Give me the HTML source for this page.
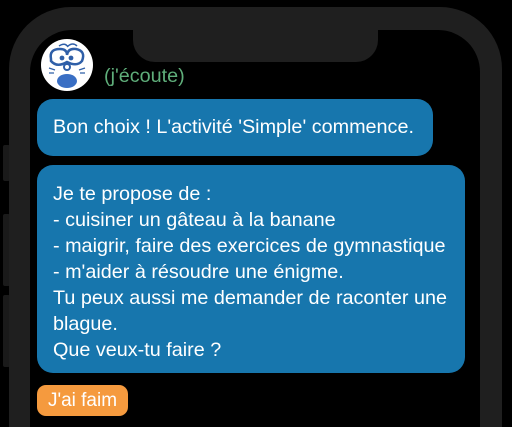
<!DOCTYPE html>
<html><head><meta charset="utf-8"><style>
html,body{margin:0;padding:0;background:#000;width:512px;height:427px;overflow:hidden;position:relative;font-family:"Liberation Sans",sans-serif}
.bezel{position:absolute;left:9px;top:7px;width:493px;height:420px;border-radius:62px 62px 0 0;background:#1f1f1f}
.screen{position:absolute;left:30px;top:30px;width:450px;height:397px;border-radius:42px 42px 0 0;background:#000}
.notch{position:absolute;left:133px;top:20px;width:245px;height:42px;background:#1f1f1f;border-radius:0 0 22px 22px}
.btn{position:absolute;left:3px;width:7px;background:#1a1a1a;border-radius:2px}
.b{position:absolute;background:#1776ad;color:#fff;font-size:19.8px;border-radius:16px;box-sizing:border-box;white-space:nowrap}
</style></head><body>
<div class="btn" style="top:145px;height:36px"></div>
<div class="btn" style="top:214px;height:72px"></div>
<div class="btn" style="top:295px;height:72px"></div>
<div class="bezel"></div>
<div class="screen"></div>
<div class="notch"></div>
<svg style="position:absolute;left:41px;top:39px" width="52" height="52" viewBox="0 0 52 52">
<circle cx="26" cy="26" r="26" fill="#fff"/>
<path d="M10 20 Q8 10 19 10 Q26 10 26 16 Q27 9 35 10 Q45 12 41 22 Q36 28 26 23 Q16 29 10 22 Z" fill="none" stroke="#2f5fa8" stroke-width="2.5"/>
<path d="M18 7 Q24 3 27 8 M27 7 Q32 3 36 7" fill="none" stroke="#2f5fa8" stroke-width="1.5"/>
<circle cx="21" cy="19" r="2.4" fill="#2f5fa8"/><circle cx="30" cy="19" r="2.4" fill="#2f5fa8"/>
<circle cx="26" cy="28" r="3" fill="none" stroke="#2f5fa8" stroke-width="2"/>
<ellipse cx="26" cy="42" rx="10" ry="7" fill="#3a6fc4"/>
<path d="M8 29 L14 31 M8 34 L13 34 M44 29 L38 31 M44 34 L39 34" stroke="#2f5fa8" stroke-width="1.3"/>
</svg>
<div style="position:absolute;left:104px;top:65px;font-size:19.8px;color:#5fae7a">(j'écoute)</div>
<div class="b" style="left:37px;top:99px;width:396px;height:57px;padding:17px 0 0 16px">Bon choix ! L'activité 'Simple' commence.</div>
<div class="b" style="left:37px;top:165px;width:428px;height:208px;padding:16px 0 0 16px;line-height:26px">Je te propose de :<br>- cuisiner un gâteau à la banane<br>- maigrir, faire des exercices de gymnastique<br>- m'aider à résoudre une énigme.<br>Tu peux aussi me demander de raconter une<br>blague.<br>Que veux-tu faire ?</div>
<div style="position:absolute;left:37px;top:385px;width:91px;height:31px;background:#f59a3e;border-radius:9px;color:#fff;font-size:19px;line-height:32px;text-align:center">J'ai faim</div>
</body></html>
